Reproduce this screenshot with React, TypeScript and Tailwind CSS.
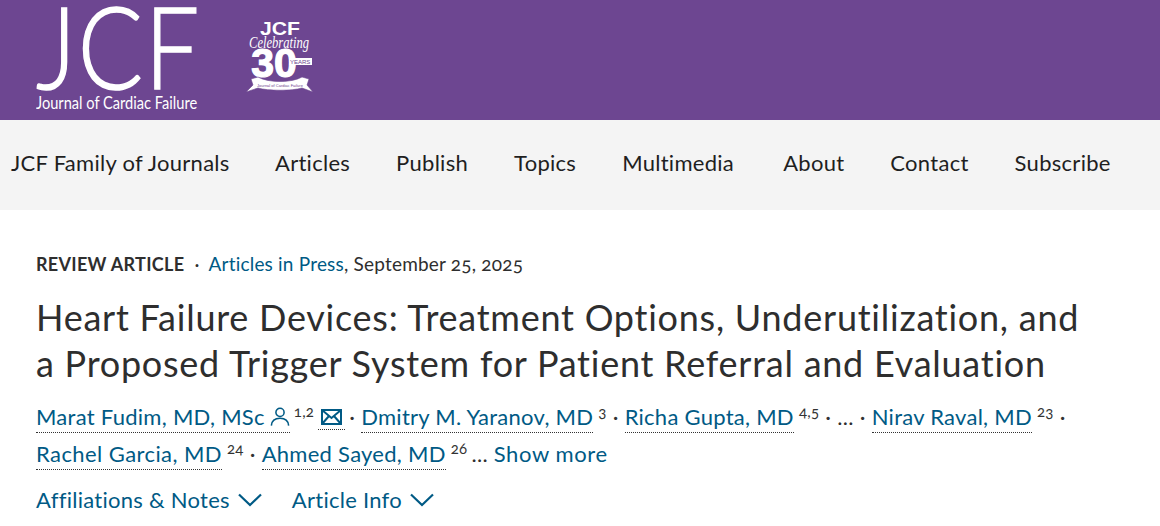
import React from "react";

const navItems = [
  { label: "JCF Family of Journals", width: "w-[218px]" },
  { label: "Articles", width: "" },
  { label: "Publish", width: "" },
  { label: "Topics", width: "" },
  { label: "Multimedia", width: "w-[115px]" },
  { label: "About", width: "" },
  { label: "Contact", width: "" },
  { label: "Subscribe", width: "" },
];

function Badge() {
  const sans = "'Liberation Sans', sans-serif";
  return (
    <svg width="68" height="76" viewBox="0 0 68 76" className="shrink-0">
      <text x="34" y="18" textAnchor="middle" fontFamily={sans} fontWeight="700" fontSize="19" textLength="40" lengthAdjust="spacingAndGlyphs" fill="#fff">JCF</text>
      <text x="33" y="31" textAnchor="middle" fontFamily="'Liberation Serif', serif" fontStyle="italic" fontSize="16" textLength="60" lengthAdjust="spacingAndGlyphs" fill="#fff">Celebrating</text>
      <text x="28" y="60" textAnchor="middle" fontFamily={sans} fontWeight="700" fontSize="41" stroke="#fff" strokeWidth="1.2" fill="#fff">30</text>
      <rect x="43" y="41" width="23" height="7" fill="#fff" />
      <text x="44" y="47" fontFamily={sans} fontSize="6" fill="#6d4691">YEARS</text>
      <path d="M0 75 L7 68 L5 62 L12 60 C22 66 46 66 56 60 L63 62 L61 68 L67 75 L56 71 C46 74 22 74 12 71 Z" fill="#fff" stroke="#6d4691" strokeWidth="0.6" />
      <text x="34" y="70" textAnchor="middle" fontFamily={sans} fontSize="4" fill="#6d4691">Journal of Cardiac Failure</text>
    </svg>
  );
}

function Author({ name, sup, person, className }: { name: string; sup: string; person?: boolean; className?: string }) {
  return (
    <>
      <a className={`border-b border-dotted border-[#333] text-[#005a85] pb-[2px] ${className ?? ""}`}>
        {name}
        {person && (
          <svg width="20" height="21" viewBox="0 0 22 22" fill="none" stroke="#005a85" strokeWidth="1.7" className="inline-block ml-[5px] mb-[6px]">
            <circle cx="11" cy="6.5" r="4.5" />
            <path d="M1.5 21 C2 15 6 13 11 13 C16 13 20 15 20.5 21" />
          </svg>
        )}
      </a>
      <sup className={`text-[15px] text-[#333] top-[-8px] ${person ? "ml-[4px]" : "ml-[5px]"}`}>{sup}</sup>
    </>
  );
}

function Sep() {
  return <span className="mx-[6px] text-[#333]">·</span>;
}

function Chevron() {
  return (
    <svg width="24" height="14" viewBox="0 0 24 14" fill="none" stroke="#005a85" strokeWidth="2.2" className="ml-[8px]">
      <path d="M1 1.5 L12 12 L23 1.5" />
    </svg>
  );
}

export default function App() {
  return (
    <div className="w-[1160px] h-[526px] overflow-hidden bg-white font-['Lato',sans-serif] text-[#2e2e2e] oldstyle-nums">
      <header className="h-[120px] bg-[#6d4691] flex items-start pl-[36px] text-white">
        <div className="w-[162px] flex flex-col">
          <div className="text-[115px] leading-[88px] h-[90px] font-light tracking-[2px] whitespace-nowrap origin-left scale-x-[.84] [-webkit-text-stroke:1.5px_white]">JCF</div>
          <div className="text-[17px] leading-[22px] mt-[2px] whitespace-nowrap origin-left scale-x-[.86]">Journal of Cardiac Failure</div>
        </div>
        <div className="ml-[48px] mt-[17px]">
          <Badge />
        </div>
      </header>

      <nav className="h-[90px] bg-[#f4f4f4] flex items-center pl-[11px] pb-[5px] gap-[46px] text-[22px] tracking-[.28px] text-[#1f1f1f]">
        {navItems.map((item) => (
          <a key={item.label} className={`whitespace-nowrap ${item.width}`}>{item.label}</a>
        ))}
      </nav>

      <main className="pl-[36px] pt-[42px]">
        <div className="text-[19px] leading-[24px] tracking-[.2px] flex items-baseline">
          <b className="font-bold text-[18px] tracking-[.3px]">REVIEW ARTICLE</b>
          <span className="ml-[10px] mr-[9px]">·</span>
          <a className="text-[#005a85]">Articles in Press</a>
          <span>, September 25, 2025</span>
        </div>
        <h1 className="mt-[18px] text-[36px] leading-[46px] font-normal tracking-[.75px] text-[#2e2e2e] w-[1050px]">
          Heart Failure Devices: Treatment Options, Underutilization, and a Proposed Trigger System for Patient Referral and Evaluation
        </h1>
        <div className="mt-[12px] text-[22px] leading-[37px] tracking-[.27px] w-[1060px]">
          <Author name="Marat Fudim, MD, MSc" sup="1,2" person />
          <a className="inline-block ml-[4px] mr-[-2px] px-[3px] border-b border-dotted border-[#333] leading-[22px]">
            <svg width="21" height="16" viewBox="0 0 21 16" fill="none" stroke="#005a85" strokeWidth="2" className="inline-block mb-[4px]">
              <rect x="1" y="1" width="19" height="14" />
              <path d="M1 1 L10.5 9 L20 1 M1 15 L8 7 M20 15 L13 7" />
            </svg>
          </a>
          <Sep />
          <Author name="Dmitry M. Yaranov, MD" sup="3" />
          <Sep />
          <Author name="Richa Gupta, MD" sup="4,5" />
          <Sep />
          <span>...</span>
          <Sep />
          <Author name="Nirav Raval, MD" sup="23" />
          <Sep />
          <br />
          <Author name="Rachel Garcia, MD" sup="24" className="tracking-[.42px]" />
          <Sep />
          <Author name="Ahmed Sayed, MD" sup="26" />
          <span className="ml-[4px]">...</span> <a className="text-[#005a85] tracking-[.6px]">Show more</a>
        </div>
        <div className="mt-[13px] flex items-center text-[22px] leading-[30px] tracking-[.27px] text-[#005a85]">
          <span>Affiliations &amp; Notes</span>
          <Chevron />
          <span className="ml-[30px]">Article Info</span>
          <Chevron />
        </div>
      </main>
    </div>
  );
}
